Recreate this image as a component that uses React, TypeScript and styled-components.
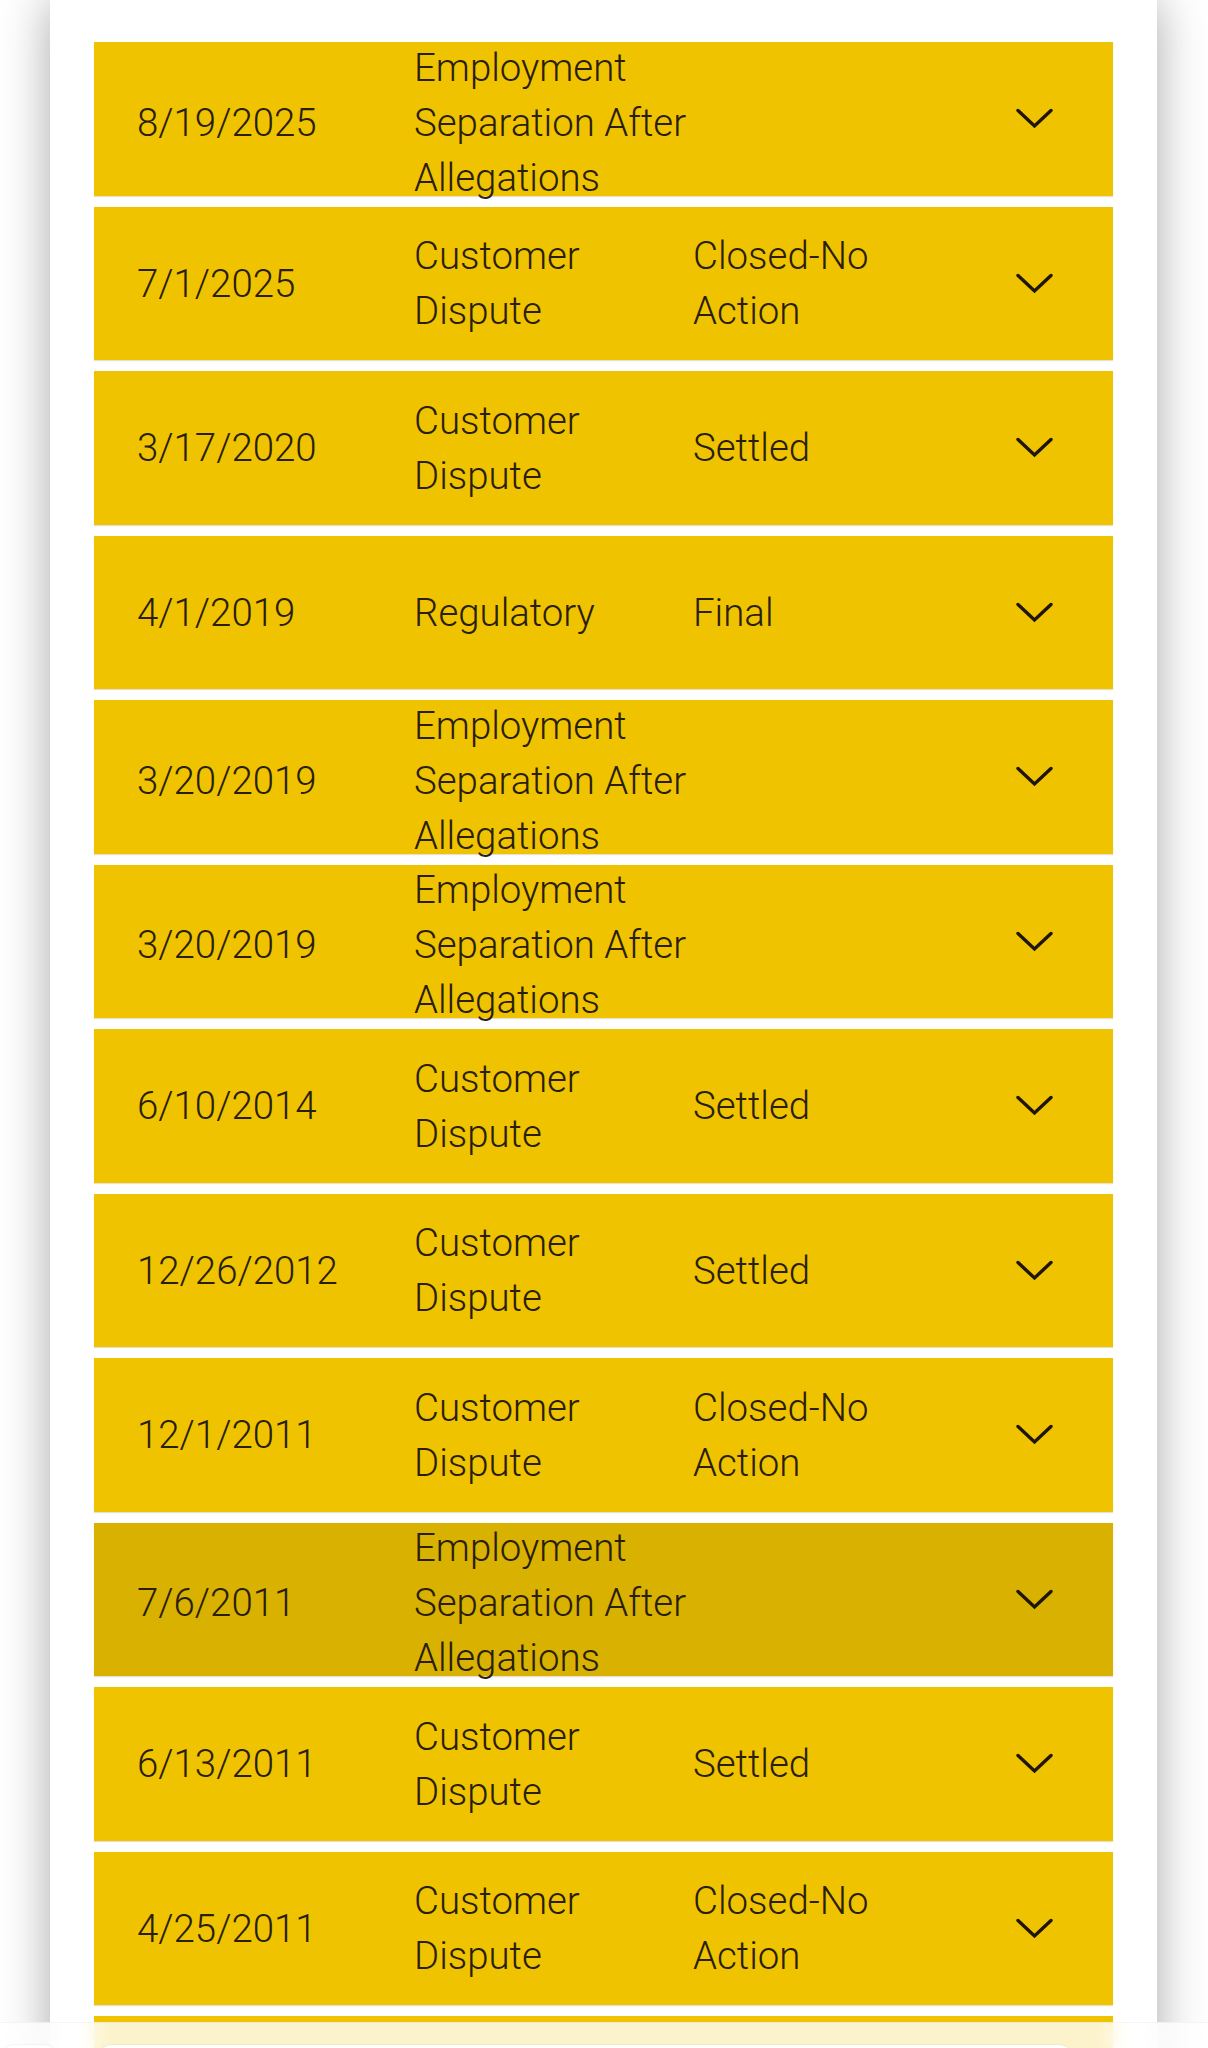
import React from "react";
import styled, { createGlobalStyle } from "styled-components";

const GlobalStyle = createGlobalStyle`
  html, body {
    margin: 0;
    padding: 0;
    background: #ffffff;
  }
  body {
    font-family: Roboto, "Noto Sans", "Liberation Sans", sans-serif;
    overflow: hidden;
  }
`;

const Page = styled.div`
  width: 1208px;
  min-height: 2048px;
  background: #ffffff;
`;

const Card = styled.main`
  width: 1107px;
  margin-left: 50px;
  box-sizing: border-box;
  background: #ffffff;
  box-shadow: 0 0 46px rgba(0, 0, 0, 0.34);
  padding: 42px 44px 80px;
  display: flex;
  flex-direction: column;
  gap: 11px;
  min-height: 2200px;
`;

const Row = styled.div<{ $active?: boolean; $tall?: boolean }>`
  height: 153.5px;
  flex: 0 0 153.5px;
  box-sizing: border-box;
  background: ${(p) => (p.$active ? "#d9b100" : "#f0c300")};
  box-shadow: 0 1px 1px rgba(120, 90, 0, 0.18);
  display: flex;
  align-items: center;
  padding: ${(p) => (p.$tall ? "7px" : "0")} 60px 0 43px;
  color: #2a1e0c;
  font-family: Roboto, "Noto Sans", "Liberation Sans", sans-serif;
  font-size: 38.4px;
  font-weight: 300;
  line-height: 55px;
  cursor: pointer;
`;

const Cell = styled.div<{ $w?: number }>`
  flex: 0 0 ${(p) => (p.$w ? `${p.$w}px` : "auto")};
  box-sizing: border-box;
`;

const Chevron = styled.svg<{ $tall?: boolean }>`
  margin-left: auto;
  margin-top: ${(p) => (p.$tall ? "-7px" : "0")};
  width: 37px;
  height: 21px;
  flex: 0 0 auto;
  color: #1f1608;
`;

const BottomBar = styled.div`
  position: fixed;
  left: 0;
  right: 0;
  top: 2022px;
  height: 40px;
  background: rgba(255, 255, 255, 0.8);
  backdrop-filter: blur(10px);
  -webkit-backdrop-filter: blur(10px);
  border-top: 1px solid rgba(0, 0, 0, 0.04);
  display: flex;
  align-items: flex-start;
  gap: 40px;
  padding: 22px 0 0;
  box-sizing: border-box;
`;

const Pill = styled.div<{ $w: number }>`
  width: ${(p) => p.$w}px;
  height: 30px;
  border-radius: 14px;
  background: #ffffff;
  box-shadow: 0 0 2px rgba(0, 0, 0, 0.12);
`;

type Disclosure = {
  date: string;
  type: string;
  status: string;
  active?: boolean;
};

const rows: Disclosure[] = [
  { date: "8/19/2025", type: "Employment Separation After Allegations", status: "" },
  { date: "7/1/2025", type: "Customer Dispute", status: "Closed-No Action" },
  { date: "3/17/2020", type: "Customer Dispute", status: "Settled" },
  { date: "4/1/2019", type: "Regulatory", status: "Final" },
  { date: "3/20/2019", type: "Employment Separation After Allegations", status: "" },
  { date: "3/20/2019", type: "Employment Separation After Allegations", status: "" },
  { date: "6/10/2014", type: "Customer Dispute", status: "Settled" },
  { date: "12/26/2012", type: "Customer Dispute", status: "Settled" },
  { date: "12/1/2011", type: "Customer Dispute", status: "Closed-No Action" },
  { date: "7/6/2011", type: "Employment Separation After Allegations", status: "", active: true },
  { date: "6/13/2011", type: "Customer Dispute", status: "Settled" },
  { date: "4/25/2011", type: "Customer Dispute", status: "Closed-No Action" },
  { date: "", type: "", status: "" },
];

function ChevronDown({ tall }: { tall?: boolean }) {
  return (
    <Chevron $tall={tall} viewBox="0 0 37 21" fill="none" aria-hidden="true">
      <path
        d="M2 2.5 L18.5 18 L35 2.5"
        stroke="currentColor"
        strokeWidth="3.4"
        strokeLinecap="round"
        strokeLinejoin="miter"
      />
    </Chevron>
  );
}

export default function App() {
  return (
    <>
      <GlobalStyle />
      <Page>
        <Card>
          {rows.map((r, i) => {
            const tall = r.type.startsWith("Employment");
            return (
              <Row key={i} $active={r.active} $tall={tall}>
                <Cell $w={277}>{r.date}</Cell>
                <Cell $w={279}>{r.type}</Cell>
                <Cell $w={230}>{r.status}</Cell>
                <ChevronDown tall={tall} />
              </Row>
            );
          })}
        </Card>
      </Page>
      <BottomBar>
        <Pill $w={58} />
        <Pill $w={975} />
      </BottomBar>
    </>
  );
}
